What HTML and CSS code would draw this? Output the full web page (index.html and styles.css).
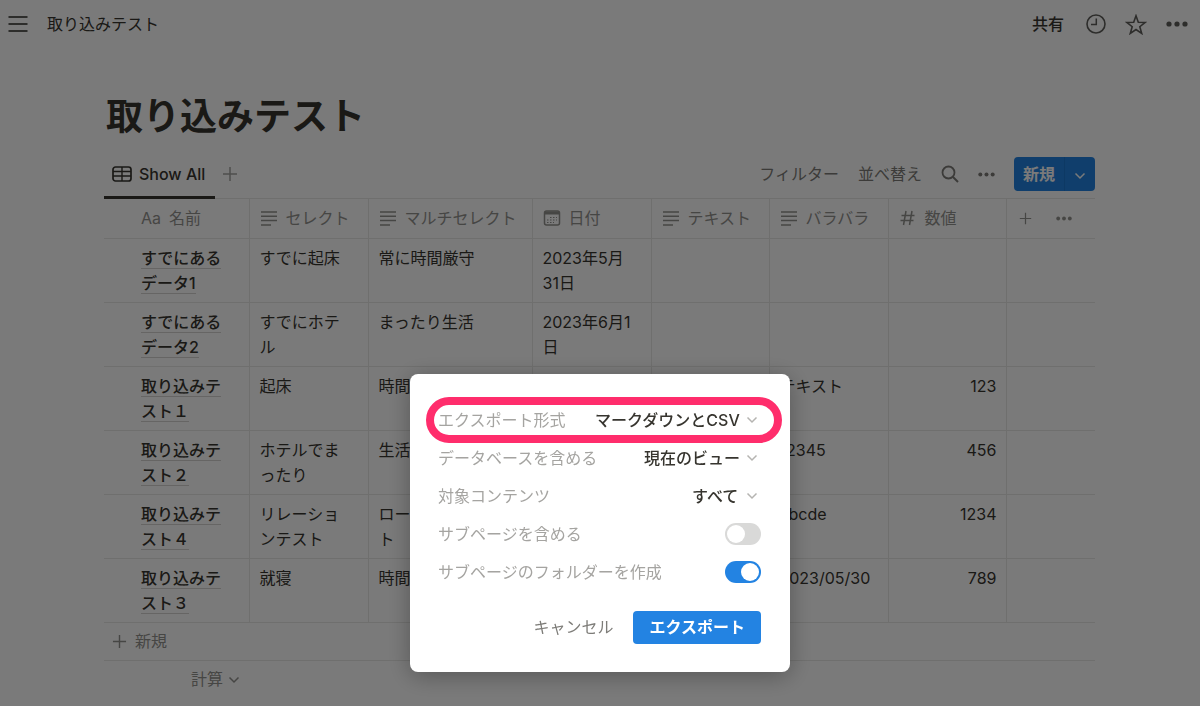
FILE: index.html
```html
<!DOCTYPE html>
<html lang="ja">
<head>
    <meta charset="UTF-8">
    <meta name="viewport" content="width=device-width, initial-scale=1.0">
    <title>取り込みテスト</title>
    <link rel="stylesheet" href="styles.css">
</head>
<body>
    <svg class="defs" aria-hidden="true">
        <symbol id="icon-plus" viewBox="0 0 16 16"><path d="M8 1v14M1 8h14"/></symbol>
        <symbol id="icon-chevron" viewBox="0 0 12 8"><path d="M1.500 1.500 6 6l4.500-4.500"/></symbol>
        <symbol id="icon-text" viewBox="0 0 18 16"><path d="M1 2h16M1 6.300h16M1 10.600h16M1 15h10"/></symbol>
        <symbol id="icon-dots" viewBox="0 0 22 6"><circle cx="3" cy="3" r="2.600"/><circle cx="11" cy="3" r="2.600"/><circle cx="19" cy="3" r="2.600"/></symbol>
    </svg>

    <header class="topbar">
        <button class="icon-button" aria-label="メニュー">
            <svg class="icon" width="20" height="18" viewBox="0 0 20 18"><path stroke-width="2" d="M0.500 2h19M0.500 9h19M0.500 16h19"/></svg>
        </button>
        <a class="breadcrumb" href="#">取り込みテスト</a>
        <div class="topbar-actions">
            <button class="share">共有</button>
            <button class="icon-button" aria-label="更新履歴">
                <svg class="icon" width="20" height="20" viewBox="0 0 20 20"><circle cx="10" cy="10" r="9" stroke-width="1.600"/><path stroke-width="1.500" d="M10.300 4.500v6H5"/></svg>
            </button>
            <button class="icon-button" aria-label="お気に入り">
                <svg class="icon" width="22" height="21" viewBox="0 0 22 21"><path stroke-width="1.600" stroke-linejoin="miter" d="M11 1.800l2.300 6.400 7 .2-5.500 4.300 1.900 6.700-5.700-3.900-5.700 3.900 1.900-6.700L1.700 8.400l7-.2z"/></svg>
            </button>
            <button class="icon-button" aria-label="その他">
                <svg class="icon-fill" width="22" height="6"><use href="#icon-dots"/></svg>
            </button>
        </div>
    </header>

    <main class="page">
        <h1>取り込みテスト</h1>

        <div class="toolbar">
            <button class="tab">
                <svg class="icon" width="20" height="16" viewBox="0 0 20 16"><rect x="1" y="1" width="18" height="14" rx="2.500" stroke-width="1.700"/><path stroke-width="1.400" d="M1 5.500h18M1 10h18M10 1v14"/></svg>
                Show All
            </button>
            <button class="icon-button muted" aria-label="ビューを追加">
                <svg class="icon" width="16" height="16"><use href="#icon-plus"/></svg>
            </button>
            <div class="toolbar-actions">
                <button>フィルター</button>
                <button>並べ替え</button>
                <button class="icon-button" aria-label="検索">
                    <svg class="icon" width="18" height="18" viewBox="0 0 18 18"><circle cx="7.500" cy="7.500" r="6" stroke-width="1.800"/><path stroke-width="2" d="M12 12l5 5"/></svg>
                </button>
                <button class="icon-button" aria-label="ビューの設定">
                    <svg class="icon-fill" width="17" height="5"><use href="#icon-dots"/></svg>
                </button>
                <div class="new-group">
                    <button class="new">新規</button>
                    <button class="new-more" aria-label="テンプレート">
                        <svg class="icon" width="12" height="8"><use href="#icon-chevron"/></svg>
                    </button>
                </div>
            </div>
        </div>

        <table>
            <colgroup>
                <col class="col-name">
                <col class="col">
                <col class="col-wide">
                <col class="col">
                <col class="col-narrow">
                <col class="col">
                <col class="col-narrow">
                <col>
            </colgroup>
            <thead>
                <tr>
                    <th class="name"><div class="head"><span class="aa">Aa</span>名前</div></th>
                    <th><div class="head"><svg class="icon" width="18" height="16"><use href="#icon-text"/></svg>セレクト</div></th>
                    <th><div class="head"><svg class="icon" width="18" height="16"><use href="#icon-text"/></svg>マルチセレクト</div></th>
                    <th><div class="head"><svg class="icon" width="18" height="16" viewBox="0 0 18 16"><rect x="1.500" y="1" width="15" height="14" rx="2"/><path stroke-width="3" d="M2 3h14"/><path stroke-width="1" stroke-dasharray="1.500 1.500" d="M7 7.500h7M4 10h10M4 12.500h7"/></svg>日付</div></th>
                    <th><div class="head"><svg class="icon" width="18" height="16"><use href="#icon-text"/></svg>テキスト</div></th>
                    <th><div class="head"><svg class="icon" width="18" height="16"><use href="#icon-text"/></svg>バラバラ</div></th>
                    <th><div class="head"><svg class="icon" width="18" height="16" viewBox="0 0 18 16"><path d="M7 1 4.500 15M13 1l-2.500 14M2.500 5.500h13M1.500 10.500h13"/></svg>数値</div></th>
                    <th>
                        <div class="head head-actions">
                            <button class="icon-button" aria-label="列を追加"><svg class="icon" width="13" height="13"><use href="#icon-plus"/></svg></button>
                            <button class="icon-button" aria-label="列の設定"><svg class="icon-fill" width="16" height="5"><use href="#icon-dots"/></svg></button>
                        </div>
                    </th>
                </tr>
            </thead>
            <tbody>
                <tr>
                    <td class="name"><a href="#">すでにあるデータ1</a></td>
                    <td>すでに起床</td>
                    <td>常に時間厳守</td>
                    <td class="date">2023年5月31日</td>
                    <td></td>
                    <td></td>
                    <td class="number"></td>
                    <td></td>
                </tr>
                <tr>
                    <td class="name"><a href="#">すでにあるデータ2</a></td>
                    <td>すでにホテル</td>
                    <td>まったり生活</td>
                    <td class="date">2023年6月1日</td>
                    <td></td>
                    <td></td>
                    <td class="number"></td>
                    <td></td>
                </tr>
                <tr>
                    <td class="name"><a href="#">取り込みテスト１</a></td>
                    <td>起床</td>
                    <td>時間</td>
                    <td class="date"></td>
                    <td></td>
                    <td>テキスト</td>
                    <td class="number">123</td>
                    <td></td>
                </tr>
                <tr>
                    <td class="name"><a href="#">取り込みテスト２</a></td>
                    <td>ホテルでまったり</td>
                    <td>生活</td>
                    <td class="date"></td>
                    <td></td>
                    <td>12345</td>
                    <td class="number">456</td>
                    <td></td>
                </tr>
                <tr>
                    <td class="name"><a href="#">取り込みテスト４</a></td>
                    <td>リレーションテスト</td>
                    <td>ロールアップテスト</td>
                    <td class="date"></td>
                    <td></td>
                    <td>abcde</td>
                    <td class="number">1234</td>
                    <td></td>
                </tr>
                <tr>
                    <td class="name"><a href="#">取り込みテスト３</a></td>
                    <td>就寝</td>
                    <td>時間</td>
                    <td class="date"></td>
                    <td></td>
                    <td>2023/05/30</td>
                    <td class="number">789</td>
                    <td></td>
                </tr>
            </tbody>
        </table>
        <button class="new-row">
            <svg class="icon" width="15" height="15"><use href="#icon-plus"/></svg>
            新規
        </button>
        <button class="calculate">
            計算
            <svg class="icon" width="12" height="8"><use href="#icon-chevron"/></svg>
        </button>
    </main>

    <div class="overlay">
        <form class="dialog" role="dialog" aria-label="エクスポート">
            <div class="option highlighted">
                <label for="format">エクスポート形式</label>
                <div class="picker">
                    <select id="format"><option>マークダウンとCSV</option></select>
                    <svg class="icon" width="12" height="8"><use href="#icon-chevron"/></svg>
                </div>
            </div>
            <div class="option">
                <label for="database">データベースを含める</label>
                <div class="picker">
                    <select id="database"><option>現在のビュー</option></select>
                    <svg class="icon" width="12" height="8"><use href="#icon-chevron"/></svg>
                </div>
            </div>
            <div class="option">
                <label for="content">対象コンテンツ</label>
                <div class="picker">
                    <select id="content"><option>すべて</option></select>
                    <svg class="icon" width="12" height="8"><use href="#icon-chevron"/></svg>
                </div>
            </div>
            <div class="option">
                <label for="subpages">サブページを含める</label>
                <input class="switch" type="checkbox" id="subpages">
            </div>
            <div class="option">
                <label for="folders">サブページのフォルダーを作成</label>
                <input class="switch" type="checkbox" id="folders" checked>
            </div>
            <div class="dialog-actions">
                <button type="button" class="cancel">キャンセル</button>
                <button type="button" class="export">エクスポート</button>
            </div>
        </form>
    </div>
</body>
</html>
```
FILE: styles.css
```css
* {
    box-sizing: border-box;
}

body {
    margin: 0;
    background-color: white;
    color: #37352f;
    font-family: Inter, "Noto Sans CJK JP", sans-serif;
    font-size: 16px;
    line-height: 25px;
}

button {
    padding: 0;
    border: none;
    background: none;
    color: inherit;
    font: inherit;
    cursor: pointer;
}

a {
    color: inherit;
    text-decoration: none;
}

.defs {
    display: none;
}

.icon {
    flex: none;
    fill: none;
    stroke: currentColor;
    stroke-width: 1.5;
}

.icon-fill {
    flex: none;
    fill: currentColor;
}

.icon-button {
    display: flex;
    align-items: center;
}

.topbar {
    display: flex;
    align-items: center;
    gap: 19px;
    height: 48px;
    padding: 0 12px 0 8px;
}

.topbar .icon-button {
    color: #5f5e5a;
}

.topbar-actions {
    display: flex;
    align-items: center;
    gap: 19px;
    margin-left: auto;
}

.share {
    padding-right: 3px;
    font-weight: 500;
}

/* database page */
.page {
    padding: 44px 105px 0 104px;
}

h1 {
    margin: 0 0 8px;
    padding-left: 2px;
    font-size: 37px;
    font-weight: 700;
    line-height: 50px;
}

.toolbar {
    display: flex;
    align-items: center;
    gap: 7px;
    height: 49px;
    border-bottom: 1px solid #e9e9e7;
}

.tab {
    display: flex;
    align-items: center;
    gap: 7px;
    height: 49px;
    padding: 3px 10px 0 8px;
    border-bottom: 3px solid #37352f;
    font-weight: 500;
}

.muted {
    color: #a5a4a1;
}

.toolbar-actions {
    display: flex;
    align-items: center;
    gap: 19px;
    margin-left: auto;
    color: #7d7c78;
}

.new-group {
    display: flex;
    height: 34px;
    border-radius: 4px;
    background-color: #2383e2;
    color: white;
}

.new {
    padding: 0 9px;
    font-weight: 700;
}

.new-more {
    padding: 0 9px;
    border-left: 1px solid #1d78d1;
}

table {
    width: 100%;
    border-collapse: collapse;
    table-layout: fixed;
}

.col-name {
    width: 145px;
}

.col {
    width: 119px;
}

.col-narrow {
    width: 118px;
}

.col-wide {
    width: 164px;
}

th,
td {
    border-right: 1px solid #e9e9e7;
    border-bottom: 1px solid #e9e9e7;
    text-align: left;
    vertical-align: top;
    word-break: break-all;
}

th:last-child,
td:last-child {
    border-right: none;
}

th {
    height: 39px;
    padding: 0 10px;
    color: #93928e;
    font-weight: 400;
    vertical-align: middle;
}

td {
    height: 64px;
    padding: 7px 14px 6px 10px;
}

th.name,
td.name {
    padding-left: 37px;
}

.head {
    display: flex;
    align-items: center;
    gap: 8px;
    white-space: nowrap;
}

.head-actions {
    gap: 24px;
    padding-left: 2px;
}

td.name a {
    border-bottom: 1px solid #d5d4d2;
    font-weight: 500;
}

td.date {
    word-break: normal;
}

td.number {
    padding-right: 9px;
    text-align: right;
}

.new-row {
    display: flex;
    align-items: center;
    gap: 8px;
    width: 100%;
    height: 38px;
    padding-left: 8px;
    border-bottom: 1px solid #e9e9e7;
    color: #93928e;
}

.calculate {
    display: flex;
    align-items: center;
    justify-content: flex-end;
    gap: 5px;
    width: 136px;
    height: 38px;
    color: #93928e;
}

/* export dialog */
.overlay {
    position: fixed;
    inset: 0;
    display: flex;
    align-items: flex-end;
    justify-content: center;
    padding-bottom: 34px;
    background-color: rgba(0, 0, 0, 0.52);
}

.dialog {
    width: 380px;
    padding: 27px 29px 28px 28px;
    border-radius: 8px;
    background-color: white;
    box-shadow: 0 4px 24px rgba(0, 0, 0, 0.3);
}

.option {
    position: relative;
    display: flex;
    align-items: center;
    justify-content: space-between;
    height: 38px;
}

.option label {
    color: #a5a4a1;
}

.highlighted::after {
    content: "";
    position: absolute;
    inset: -4px -21px -4px -12px;
    border: 8px solid #ff2d6c;
    border-radius: 23px;
    pointer-events: none;
}

.picker {
    display: flex;
    align-items: center;
    gap: 5px;
    padding-right: 3px;
    color: #b5b4b1;
}

select {
    padding: 0;
    border: none;
    background: none;
    color: #37352f;
    font: inherit;
    font-weight: 500;
    appearance: none;
}

.switch {
    display: flex;
    align-items: center;
    width: 36px;
    height: 22px;
    margin: 0;
    padding: 2px;
    border-radius: 11px;
    background-color: #d9d9d8;
    appearance: none;
}

.switch::before {
    content: "";
    width: 18px;
    height: 18px;
    border-radius: 50%;
    background-color: white;
}

.switch:checked {
    justify-content: flex-end;
    background-color: #2383e2;
}

.dialog-actions {
    display: flex;
    justify-content: flex-end;
    gap: 20px;
    margin-top: 20px;
}

.cancel {
    color: #7d7c78;
}

.export {
    height: 33px;
    padding: 0 16px;
    border-radius: 4px;
    background-color: #2383e2;
    color: white;
    font-weight: 700;
}
```
